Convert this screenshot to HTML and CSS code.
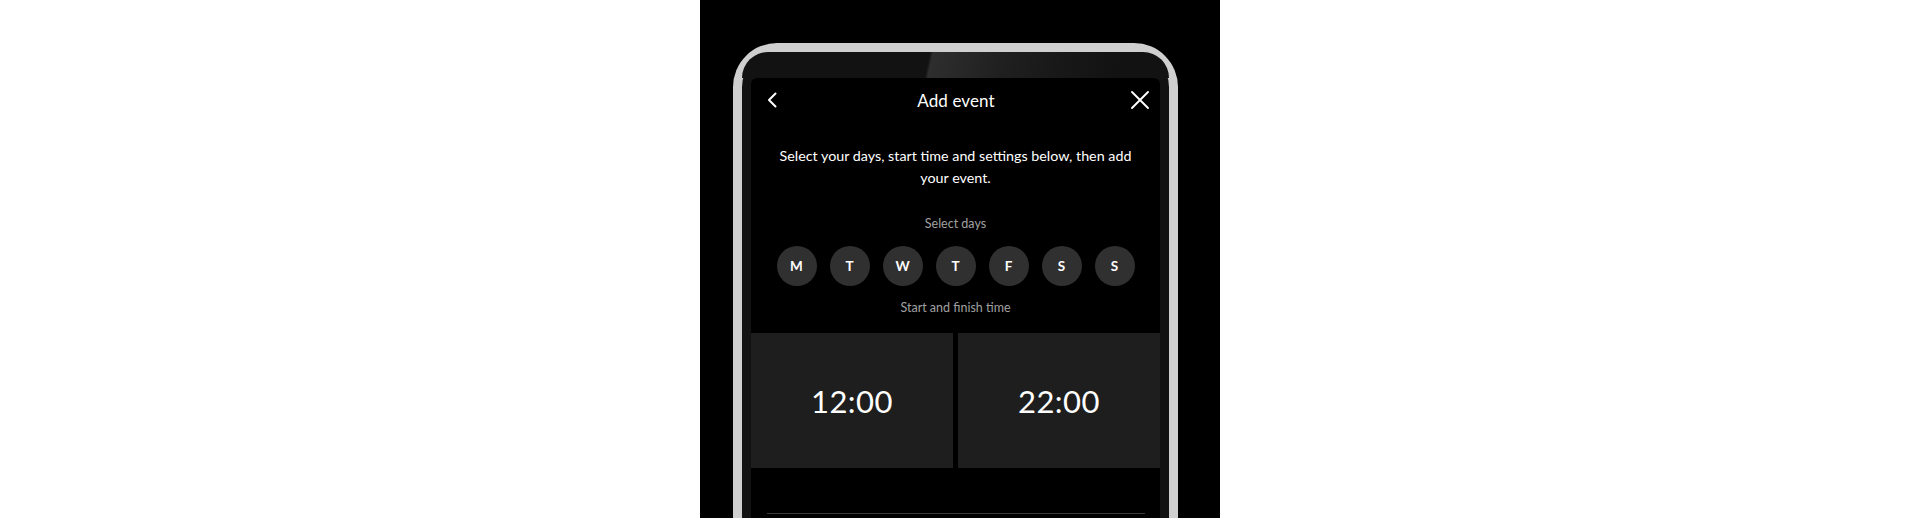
FILE: index.html
```html
<!DOCTYPE html>
<html lang="en">
<head>
<meta charset="utf-8">
<title>Add event</title>
<link rel="stylesheet" href="styles.css">
</head>
<body>
<div class="stage">
  <div class="phone">
    <div class="notch"></div>
    <div class="screen">
      <header class="topbar">
        <button class="icon-btn back" aria-label="Back">
          <svg width="12" height="16" viewBox="0 0 12 16"><path d="M9.5 1.5 L3 8 L9.5 14.5" fill="none" stroke="#fff" stroke-width="2" stroke-linecap="round" stroke-linejoin="round"/></svg>
        </button>
        <h1 class="title">Add event</h1>
        <button class="icon-btn close" aria-label="Close">
          <svg width="20" height="20" viewBox="0 0 20 20"><path d="M2 2 L18 18 M18 2 L2 18" fill="none" stroke="#fff" stroke-width="1.9" stroke-linecap="round"/></svg>
        </button>
      </header>
      <p class="intro">Select your days, start time and settings below, then add your event.</p>
      <p class="label">Select days</p>
      <div class="days">
        <span class="day">M</span>
        <span class="day">T</span>
        <span class="day">W</span>
        <span class="day">T</span>
        <span class="day">F</span>
        <span class="day">S</span>
        <span class="day">S</span>
      </div>
      <p class="label label-time">Start and finish time</p>
      <div class="times">
        <div class="time-card">12:00</div>
        <div class="time-card">22:00</div>
      </div>
      <div class="divider"></div>
    </div>
  </div>
</div>
</body>
</html>
```
FILE: styles.css
```css
html, body {
  margin: 0;
  padding: 0;
  background: #ffffff;
}

body {
  font-family: "Lato", "Liberation Sans", sans-serif;
}

.stage {
  width: 520px;
  height: 518px;
  margin-left: 700px;
  background: #000000;
  overflow: hidden;
  box-sizing: border-box;
  padding: 43px 42px 0 33px;
}

.phone {
  height: 520px;
  border: 9px solid #cfcfcf;
  border-bottom: none;
  border-radius: 44px 44px 0 0;
  background: #121212;
  padding: 0 9px;
  display: flex;
  flex-direction: column;
}

.notch {
  height: 26px;
  flex: none;
  margin: 0 -9px;
  border-radius: 36px 36px 0 0;
  background: linear-gradient(102deg, #121212 0, #121212 43.5%, #2e2e2e 44.2%, #202020 60%, #181818 74%, #121212 88%);
}

.screen {
  flex: 1;
  background: #000000;
  border-radius: 6px 6px 0 0;
  color: #ffffff;
  display: flex;
  flex-direction: column;
  align-items: center;
}

.topbar {
  width: 100%;
  height: 44px;
  display: flex;
  align-items: center;
  justify-content: space-between;
  box-sizing: border-box;
  padding: 0 9px 0 10px;
}

.icon-btn {
  background: none;
  border: 0;
  padding: 0;
  width: 22px;
  height: 22px;
  display: flex;
  align-items: center;
  justify-content: center;
}

.title {
  margin: 0;
  font-size: 17px;
  font-weight: 400;
  letter-spacing: 0.1px;
}

.intro {
  margin: 23px 0 0;
  width: 372px;
  text-align: center;
  font-size: 14.3px;
  line-height: 22px;
}

.label {
  margin: 26px 0 0;
  font-size: 12.5px;
  line-height: 18px;
  color: #a0a0a0;
}

.days {
  margin-top: 13px;
  display: flex;
  gap: 13px;
}

.day {
  width: 40px;
  height: 40px;
  border-radius: 50%;
  background: #303030;
  display: flex;
  align-items: center;
  justify-content: center;
  font-size: 13.5px;
  font-weight: 700;
}

.label-time {
  margin-top: 13px;
}

.times {
  margin-top: 16px;
  width: 100%;
  display: grid;
  grid-template-columns: 1fr 1fr;
  gap: 5px;
}

.time-card {
  height: 135px;
  background: #1e1e1e;
  display: flex;
  align-items: center;
  justify-content: center;
  font-size: 31px;
  font-weight: 400;
  letter-spacing: 0.5px;
}

.divider {
  margin-top: 45px;
  width: 378px;
  height: 1px;
  background: #3c3c3c;
}
```
